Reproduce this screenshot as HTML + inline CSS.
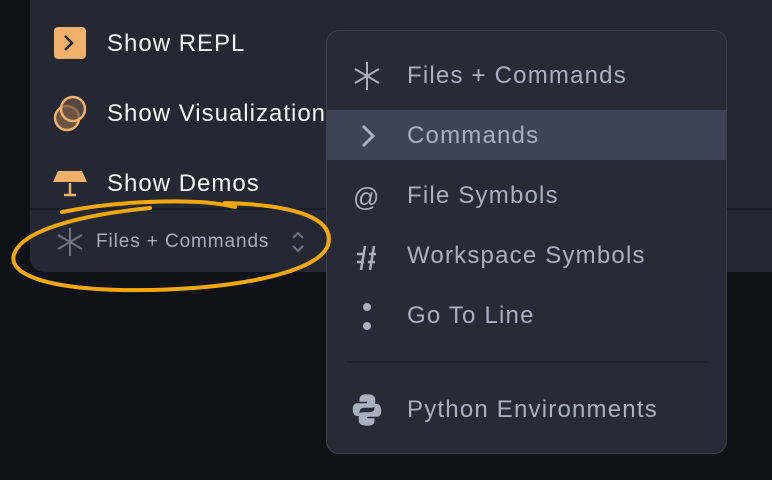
<!DOCTYPE html>
<html><head><style>
body{margin:0;width:772px;height:480px;background:#0e1116;overflow:hidden;position:relative;font-family:"Liberation Sans",sans-serif}
.panel{position:absolute;left:30px;top:-20px;width:760px;height:292px;background:#232833;border-radius:14px}
.sep{position:absolute;left:30px;top:208px;width:742px;height:2px;background:#1a1e26}
.li{position:absolute;left:107px;color:#f1f3f6;font-size:24px;line-height:30px;letter-spacing:1px;white-space:nowrap}
.menu{position:absolute;left:326px;top:30px;width:401px;height:424px;background:#262b36;border:1px solid #3b404b;border-radius:13px;box-sizing:border-box}
.mi{position:absolute;left:80px;color:#a9b0c0;font-size:24px;line-height:30px;letter-spacing:1.2px;white-space:nowrap}
.hl{position:absolute;left:0;top:79px;width:399px;height:50px;background:#3c4456}
</style></head><body>
<div class="panel"></div>
<div class="sep"></div>
<svg style="position:absolute;left:0;top:0" width="772" height="480">
<rect x="54" y="27" width="32" height="32" rx="4" fill="#f2b06a"/>
<path d="M65 36l7 7-7 7" stroke="#1d2129" stroke-width="2.5" fill="none"/>
<circle cx="67" cy="118" r="12" fill="#6b5444" stroke="#f2b06a" stroke-width="2.5"/>
<circle cx="73" cy="109" r="12" fill="#6b5444" fill-opacity=".7" stroke="#f2b06a" stroke-width="2.5"/>
<path d="M58 171h24l5 11H53z" fill="#f2b06a"/>
<path d="M70 183v11M64 195h12" stroke="#f2b06a" stroke-width="2.5"/>
<path d="M70 228v28M58 235l24 14M58 249l24-14" stroke="#6e7584" stroke-width="2"/>
<path d="M293 238l5-5 5 5M293 246l5 5 5-5" stroke="#6e7584" stroke-width="2" fill="none"/>
</svg>
<div class="li" style="top:29px">Show REPL</div>
<div class="li" style="top:99px">Show Visualizations</div>
<div class="li" style="top:169px">Show Demos</div>
<div style="position:absolute;left:96px;top:231px;color:#a7adba;font-size:19px;line-height:22px;letter-spacing:0.9px;white-space:nowrap">Files + Commands</div>
<div class="menu">
<div class="hl"></div>
<svg style="position:absolute;left:0;top:0" width="398" height="420">
<path d="M40 31v28M28 38l24 14M28 52l24-14" stroke="#a9b0c0" stroke-width="2"/>
<path d="M36 95l10 10-10 10" stroke="#a9b0c0" stroke-width="3" fill="none"/>
<text x="26" y="175" fill="#a9b0c0" font-size="26" font-family="Liberation Sans">@</text>
<path d="M38 215l-4 24M47 215l-4 24M30 223h8M42 223h7M30 231h7M41 231h7" stroke="#a9b0c0" stroke-width="2.5"/>
<circle cx="40" cy="276" r="4" fill="#a9b0c0"/><circle cx="40" cy="295" r="4" fill="#a9b0c0"/>
<rect x="20" y="330" width="360" height="2" fill="#1d2129"/>
<g transform="translate(40 379) scale(0.75) translate(-40 -384)">
<path d="M40 363c-8 0-10 3-10 7v3h10v2h-13c-4 0-6 3-6 8s2 9 6 9h3v-5c0-4 3-6 7-6h9c3 0 5-2 5-5v-6c0-4-3-7-11-7z" fill="#a9b0c0"/>
<path d="M40 405c8 0 10-3 10-7v-3h-10v-2h13c4 0 6-3 6-8s-2-9-6-9h-3v5c0 4-3 6-7 6h-9c-3 0-5 2-5 5v6c0 4 3 7 11 7z" fill="#a9b0c0"/>
</g>
</svg>
<div class="mi" style="top:30px">Files + Commands</div>
<div class="mi" style="top:90px">Commands</div>
<div class="mi" style="top:150px">File Symbols</div>
<div class="mi" style="top:210px">Workspace Symbols</div>
<div class="mi" style="top:270px">Go To Line</div>
<div class="mi" style="top:364px">Python Environments</div>
</div>
<svg style="position:absolute;left:0;top:0" width="772" height="480">
<path d="M62 212C120 200 200 198 235 207M225 203C300 205 335 220 328 245C318 275 220 292 120 290C40 288 5 272 15 252C25 230 80 215 150 208" stroke="#f5a800" stroke-width="4" fill="none" stroke-linecap="round"/>
</svg>
</body></html>
